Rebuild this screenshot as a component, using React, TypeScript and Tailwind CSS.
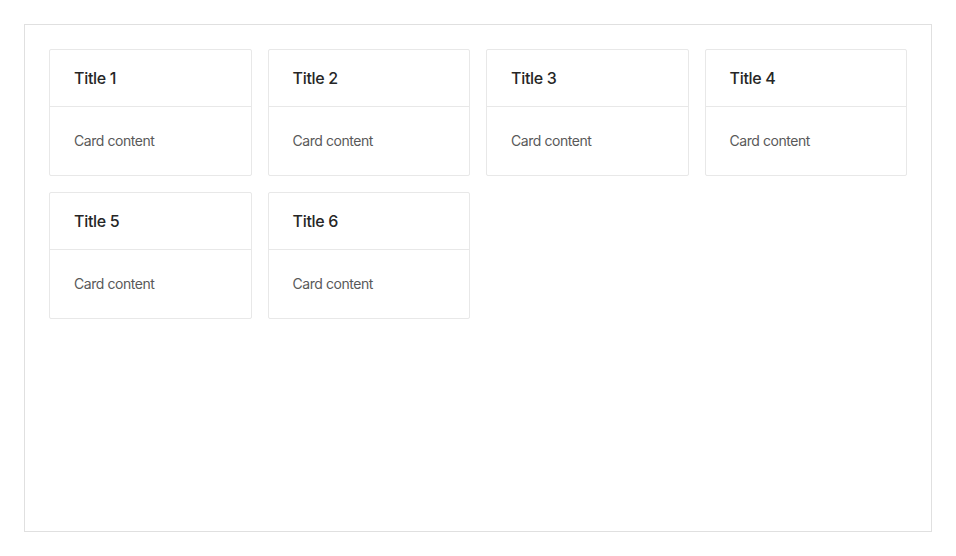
import React from "react";

export default function App() {
  const items = [1, 2, 3, 4, 5, 6];
  return (
    <div className="h-[556px] w-[956px] bg-white p-6" style={{ fontFamily: "Inter, 'Noto Sans', sans-serif" }}>
      <div className="h-full border border-[#e0e0e0] bg-white p-6">
        <div className="grid grid-cols-4 gap-4">
          {items.map((i) => (
            <div key={i} className="rounded-[2px] border border-[#e8e8e8] bg-white">
              <div className="flex h-[57px] items-center border-b border-[#e8e8e8] px-6 text-[16px] font-medium tracking-[-0.3px] text-[#262626]">
                Title {i}
              </div>
              <div className="p-6 text-[14px] leading-5 tracking-[-0.45px] text-[#595959]">Card content</div>
            </div>
          ))}
        </div>
      </div>
    </div>
  );
}
